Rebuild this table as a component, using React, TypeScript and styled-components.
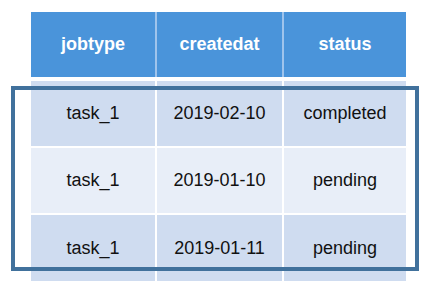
import React from "react";
import styled, { createGlobalStyle } from "styled-components";

const Global = createGlobalStyle`
  html, body { margin: 0; padding: 0; background: #ffffff; }
  body { font-family: "Liberation Sans", Arial, sans-serif; }
`;

const Page = styled.div`
  position: relative;
  width: 427px;
  height: 293px;
  padding: 12px 0 0 31px;
  box-sizing: border-box;
`;

const Table = styled.div`
  display: grid;
  grid-template-columns: 124px 125px 122px;
  column-gap: 2px;
  row-gap: 2px;
  width: 375px;
`;

const HeaderCell = styled.div`
  height: 65px;
  margin-bottom: 2px;
  background: #4a94da;
  color: #ffffff;
  font-weight: 700;
  font-size: 18px;
  display: flex;
  align-items: center;
  justify-content: center;
  box-shadow: ${(p: { $first?: boolean }) => (p.$first ? "none" : "-2px 0 0 #9fc4ec")};
`;

const Cell = styled.div<{ $shade: "dark" | "light"; $tall?: boolean }>`
  height: ${(p) => (p.$tall ? "66px" : "65px")};
  background: ${(p) => (p.$shade === "dark" ? "#cfdcf0" : "#e8eef8")};
  color: #111111;
  font-size: 18px;
  display: flex;
  align-items: center;
  justify-content: center;
`;

const Highlight = styled.div`
  position: absolute;
  left: 11px;
  top: 86px;
  width: 408px;
  height: 185px;
  box-sizing: border-box;
  border: 4px solid #41719c;
  pointer-events: none;
`;

const headers = ["jobtype", "createdat", "status"];
const rows = [
  ["task_1", "2019-02-10", "completed"],
  ["task_1", "2019-01-10", "pending"],
  ["task_1", "2019-01-11", "pending"],
];

export default function App() {
  return (
    <>
      <Global />
      <Page>
        <Table>
          {headers.map((h, i) => (
            <HeaderCell key={h} $first={i === 0}>
              {h}
            </HeaderCell>
          ))}
          {rows.map((r, ri) =>
            r.map((c, ci) => (
              <Cell
                key={`${ri}-${ci}`}
                $shade={ri % 2 === 0 ? "dark" : "light"}
                $tall={ri === 2}
              >
                {c}
              </Cell>
            ))
          )}
        </Table>
        <Highlight />
      </Page>
    </>
  );
}
